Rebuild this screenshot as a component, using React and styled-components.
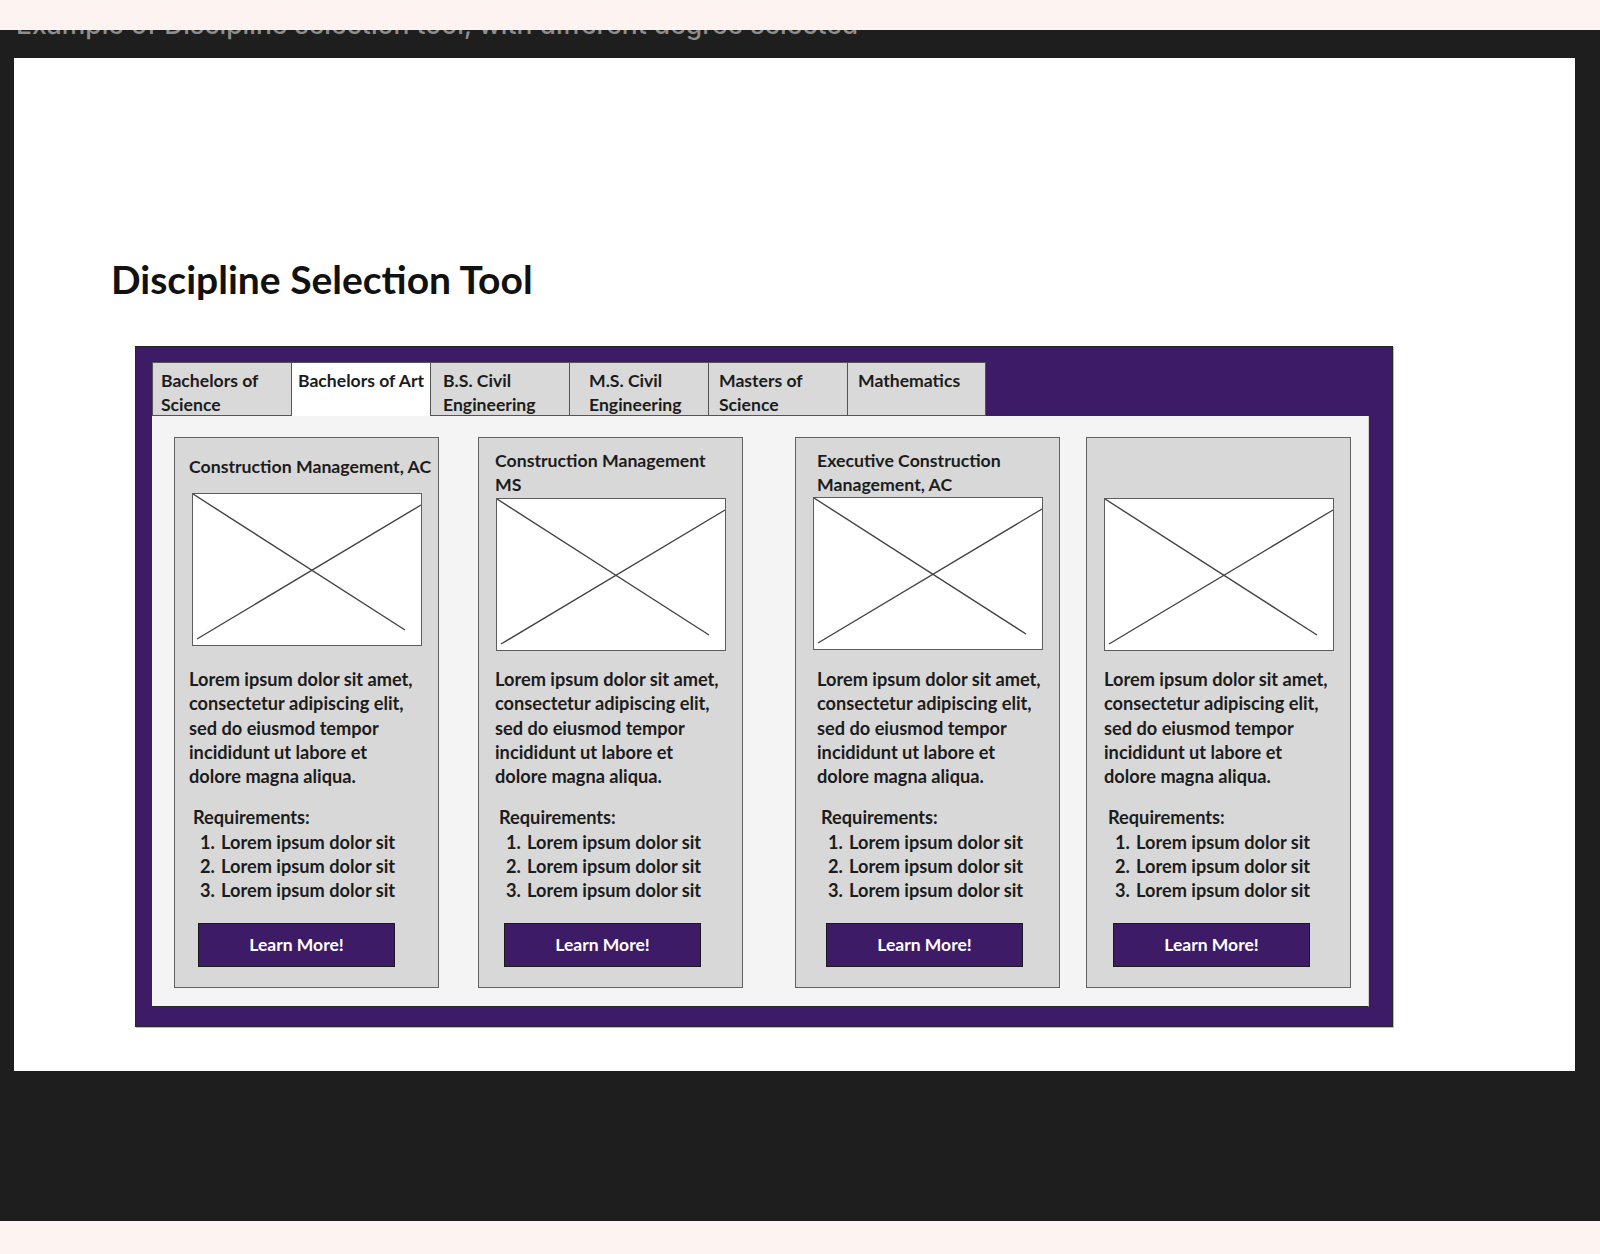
import React from "react";
import styled, { createGlobalStyle } from "styled-components";

const Global = createGlobalStyle`
  html, body { margin: 0; padding: 0; background: #1e1e1e; }
  body { font-family: Lato, "Liberation Sans", sans-serif; }
  * { box-sizing: border-box; }
`;

const PURPLE = "#3d1b67";
const INK = "#1c1c1c";

const Page = styled.div`
  width: 1600px;
  min-height: 1254px;
  display: flex;
  flex-direction: column;
  background: #1e1e1e;
`;

const Strip = styled.div`
  height: ${(p) => p.$h}px;
  background: #fdf3f1;
  flex: none;
`;

const Stage = styled.div`
  padding: 0 25px 150px 14px;
  background: #1e1e1e;
`;

const CaptionClip = styled.div`
  height: 28px;
  overflow: hidden;
`;

const Caption = styled.div`
  margin: -21px 0 0 2px;
  font-family: Inter, "Noto Sans", sans-serif;
  font-weight: 500;
  font-size: 26.5px;
  line-height: 30px;
  color: #8e8e8e;
  white-space: nowrap;
`;

const Sheet = styled.div`
  height: 1013px;
  background: #ffffff;
  padding: 198px 0 0 97px;
`;

const Heading = styled.h1`
  margin: 0 0 43px 0;
  font-family: Lato, "Liberation Sans", sans-serif;
  font-weight: 700;
  font-size: 39px;
  line-height: 47px;
  color: #111;
`;

const Frame = styled.div`
  width: 1258px;
  height: 681px;
  margin-left: 24px;
  background: ${PURPLE};
  border: 1px solid #262626;
  box-shadow: 1px 1px 0 #bdbdbd;
  padding: 15px 23px 19px 16px;
  display: flex;
  flex-direction: column;
`;

const TabRow = styled.div`
  display: flex;
  height: 54px;
  flex: none;
`;

const Tab = styled.div`
  width: 139px;
  height: 54px;
  padding: 6px 0 0 ${(p) => p.$pad}px;
  background: ${(p) => (p.$active ? "#ffffff" : "#d9d9d9")};
  border: 1px solid #555;
  border-right: ${(p) => (p.$last ? "1px solid #555" : "none")};
  border-bottom: ${(p) => (p.$active ? "none" : "1px solid #555")};
  font-weight: 700;
  font-size: 17.6px;
  line-height: 24px;
  color: ${INK};
  white-space: nowrap;
  overflow: hidden;
`;

const Content = styled.div`
  flex: 1;
  display: flex;
  align-items: flex-start;
  background: #f4f4f4;
  border-bottom: 1px solid #2a2a2a;
  border-right: 1px solid #cfcfcf;
  padding-top: 21px;
`;

const Card = styled.div`
  width: 265px;
  height: 551px;
  margin-left: ${(p) => p.$gap}px;
  flex: none;
  background: #d8d8d8;
  border: 1px solid #626262;
  display: flex;
  flex-direction: column;
  color: ${INK};
  font-weight: 700;
  font-size: 18.2px;
  line-height: 24.3px;
`;

const CardHeader = styled.div`
  height: ${(p) => 60 - p.$lift}px;
  display: flex;
  flex-direction: column;
  justify-content: flex-end;
  padding: 0 0 ${(p) => p.$pb}px ${(p) => p.$inset - 1}px;
  font-size: 17.7px;
  line-height: 24px;
  white-space: nowrap;
`;

const Placeholder = styled.svg`
  display: block;
  width: 230px;
  height: 153px;
  margin-left: 17px;
  background: #ffffff;
  border: 1px solid #5c5c5c;
  flex: none;
`;

const Body = styled.p`
  margin: ${(p) => 16 + p.$lift}px 0 0 0;
  padding-left: ${(p) => p.$inset - 1}px;
  white-space: nowrap;
`;

const ReqLabel = styled.div`
  margin-top: 17px;
  padding-left: ${(p) => p.$inset + 3}px;
`;

const ReqList = styled.ol`
  list-style: none;
  margin: 0;
  padding: 0 0 0 ${(p) => p.$inset + 10}px;
`;

const ReqItem = styled.li`
  display: flex;
  white-space: nowrap;
`;

const Num = styled.span`
  width: 21px;
  flex: none;
`;

const Button = styled.button`
  margin: 20px 0 0 ${(p) => p.$inset + 8}px;
  width: 197px;
  height: 44px;
  background: ${PURPLE};
  border: 1px solid #1a1a1a;
  color: #ffffff;
  font-family: Lato, "Liberation Sans", sans-serif;
  font-weight: 700;
  font-size: 17.5px;
  padding: 0;
  cursor: pointer;
`;

const tabs = [
  { lines: ["Bachelors of", "Science"], pad: 8 },
  { lines: ["Bachelors of Art"], pad: 6, active: true },
  { lines: ["B.S. Civil", "Engineering"], pad: 12 },
  { lines: ["M.S. Civil", "Engineering"], pad: 19 },
  { lines: ["Masters of", "Science"], pad: 10 },
  { lines: ["Mathematics"], pad: 10 },
];

const bodyLines = [
  "Lorem ipsum dolor sit amet,",
  "consectetur adipiscing elit,",
  "sed do eiusmod tempor",
  "incididunt ut labore et",
  "dolore magna aliqua.",
];

const cards = [
  { title: ["Construction Management, AC"], gap: 22, inset: 15, pb: 14, lift: 5 },
  { title: ["Construction Management", "MS"], gap: 39, inset: 17, pb: 1, lift: 0 },
  { title: ["Executive Construction", "Management, AC"], gap: 52, inset: 22, pb: 0, lift: 1 },
  { title: [], gap: 26, inset: 18, pb: 0, lift: 0 },
];

function Lines({ lines }) {
  return lines.map((l, i) => (
    <React.Fragment key={i}>
      {i > 0 && <br />}
      {l}
    </React.Fragment>
  ));
}

function ImageX() {
  return (
    <Placeholder viewBox="0 0 228 151" preserveAspectRatio="none">
      <line x1="0" y1="0" x2="212" y2="136" stroke="#444" strokeWidth="1.4" />
      <line x1="4" y1="145" x2="228" y2="11" stroke="#444" strokeWidth="1.4" />
    </Placeholder>
  );
}

function DegreeCard({ card }) {
  const { title, gap, inset, pb, lift } = card;
  return (
    <Card $gap={gap}>
      <CardHeader $inset={inset} $pb={pb} $lift={lift}>
        {title.map((t) => (
          <div key={t}>{t}</div>
        ))}
      </CardHeader>
      <ImageX />
      <Body $inset={inset} $lift={lift}>
        <Lines lines={bodyLines} />
      </Body>
      <ReqLabel $inset={inset}>Requirements:</ReqLabel>
      <ReqList $inset={inset}>
        {[1, 2, 3].map((n) => (
          <ReqItem key={n}>
            <Num>{n}.</Num>
            Lorem ipsum dolor sit
          </ReqItem>
        ))}
      </ReqList>
      <Button $inset={inset}>Learn More!</Button>
    </Card>
  );
}

export default function App() {
  return (
    <Page>
      <Global />
      <Strip $h={30} />
      <Stage>
        <CaptionClip>
          <Caption>Example of Discipline selection tool, with different degree selected</Caption>
        </CaptionClip>
        <Sheet>
          <Heading>Discipline Selection Tool</Heading>
          <Frame>
            <TabRow>
              {tabs.map((t, i) => (
                <Tab key={i} $pad={t.pad} $active={t.active} $last={i === tabs.length - 1}>
                  <Lines lines={t.lines} />
                </Tab>
              ))}
            </TabRow>
            <Content>
              {cards.map((c, i) => (
                <DegreeCard key={i} card={c} />
              ))}
            </Content>
          </Frame>
        </Sheet>
      </Stage>
      <Strip $h={33} />
    </Page>
  );
}
